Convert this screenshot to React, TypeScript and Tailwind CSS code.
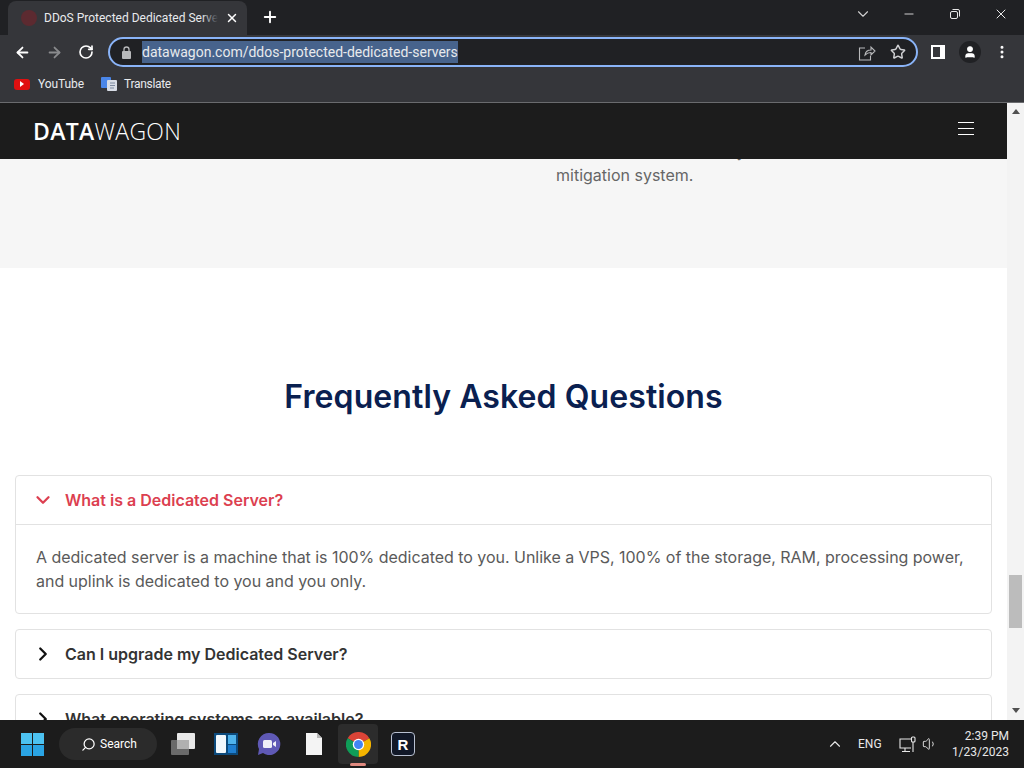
import { ArrowLeft, ArrowRight, ChevronDown, ChevronRight, ChevronUp, Minus, MoreVertical, Plus, RotateCw, Search, Star, User, Volume1, X } from 'lucide-react';

const faqs = ['Can I upgrade my Dedicated Server?', 'What operating systems are available?'];

function Chrome() {
  return (
    <div className="bg-[#35363a] text-white border-b border-[#6a6b6e] h-[103px] shrink-0 font-['Roboto',sans-serif]">
      <div className="h-[35px] bg-[#202124] flex items-end relative">
        <div className="ml-2 w-[239px] h-[34px] rounded-t-lg bg-[#35363a] flex items-center pl-[13px] pr-[8px]">
          <div className="w-4 h-4 rounded-full bg-[#5c2a30] shrink-0" />
          <div className="ml-[7px] relative w-[174px] overflow-hidden">
            <span className="block text-[12px] text-[#e8eaed] whitespace-nowrap">DDoS Protected Dedicated Serve</span>
            <div className="absolute right-0 top-0 bottom-0 w-4 bg-gradient-to-r from-transparent to-[#35363a]" />
          </div>
          <X className="ml-[7px] w-[14px] h-[14px]" strokeWidth={2.5} />
        </div>
        <Plus className="ml-[14px] mb-[9px] w-[18px] h-[18px]" strokeWidth={2.5} />
        <ChevronDown className="absolute left-[854px] top-[5px] w-[18px] h-[18px] text-[#d0d0d0]" strokeWidth={1.5} />
        <Minus className="absolute left-[902px] top-[7px] w-[14px] h-[14px] text-[#e8e8e8]" strokeWidth={1.5} />
        <svg className="absolute left-[950px] top-[9px] w-[10px] h-[10px] text-[#e8e8e8]" viewBox="0 0 10 10" fill="none" stroke="currentColor">
          <rect x="0.500" y="2.500" width="7" height="7" rx="1.500" />
          <path d="M2.500 .5H8a1.500 1.500 0 0 1 1.500 1.500v5.500" />
        </svg>
        <X className="absolute left-[993px] top-[6px] w-[16px] h-[16px] text-[#e8e8e8]" strokeWidth={1.5} />
      </div>
      <div className="h-[34px] flex items-center">
        <ArrowLeft className="ml-[14px] w-[17px] h-[17px]" strokeWidth={2.5} />
        <ArrowRight className="ml-[15px] w-[17px] h-[17px] text-[#8a8b8d]" strokeWidth={2.5} />
        <RotateCw className="ml-[15px] w-[16px] h-[16px]" strokeWidth={2.5} />
        <div className="ml-[14px] w-[810px] h-[30px] rounded-full border-2 border-[#8ab4f8] bg-[#202124] flex items-center relative">
          <svg className="ml-[11px] w-[11px] h-[13px] text-[#b8b9bb]" viewBox="0 0 11 13" fill="currentColor">
            <rect x="1" y="5" width="9" height="8" rx="1" />
            <path d="M3 5V3.500a2.500 2.500 0 0 1 5 0V5" fill="none" stroke="currentColor" strokeWidth="1.300" />
          </svg>
          <span className="ml-[10px] text-[14px] leading-[22px] h-[22px] bg-[#47638c] text-[#e8eaed] font-['Roboto',sans-serif]">datawagon.com/ddos-protected-dedicated-servers</span>
          <svg className="absolute left-[748px] top-[5px] w-[18px] h-[17px] text-[#b8b9bb]" viewBox="0 0 18 17" fill="none" stroke="currentColor" strokeWidth="1.1">
            <path d="M7 4H1.500v12h11v-4M7 11c.5-3.500 3-5 6-5V3l4 4-4 4V8.500c-2.500 0-4.500 1-6 2.500z" />
          </svg>
          <Star className="absolute left-[780px] top-[5px] w-[16px] h-[16px] text-[#d0d1d3]" strokeWidth={2.2} />
        </div>
        <div className="ml-[13px] w-[14px] h-[14px] bg-white"><div className="w-[7px] h-[10px] mt-[2px] ml-[2px] bg-[#35363a]" /></div>
        <div className="ml-[14px] w-[22px] h-[22px] rounded-full bg-[#202124] flex items-center justify-center"><User className="w-[14px] h-[14px] text-white" fill="white" /></div>
        <MoreVertical className="ml-[13px] w-[16px] h-[16px]" strokeWidth={2.5} />
      </div>
      <div className="h-[33px] pb-[3px] flex items-center text-[12px] text-[#e8eaed]">
        <div className="ml-[14px] w-[16px] h-[11px] rounded-[3px] bg-[#e01010] flex items-center justify-center">
          <div className="w-0 h-0 border-y-[3px] border-y-transparent border-l-[4px] border-l-white" />
        </div>
        <span className="ml-2 w-[46px] whitespace-nowrap tracking-[-0.1px]">YouTube</span>
        <svg className="ml-[17px] w-[16px] h-[16px]" viewBox="0 0 16 16">
          <rect x="0" y="1" width="10" height="11" rx="1" fill="#4a86e8" />
          <rect x="6" y="4" width="10" height="11" rx="1" fill="#d8dde6" />
          <path d="M9 7h5M9 9.500h5M9 12h4" stroke="#7d8aa0" strokeWidth="1" />
        </svg>
        <span className="ml-[7px] tracking-[-0.3px]">Translate</span>
      </div>
    </div>
  );
}

function Taskbar() {
  return (
    <div className="h-12 shrink-0 bg-[#1c1c1c] text-white flex items-center relative font-['Roboto',sans-serif]">
      <div className="ml-[21px] w-[23px] h-[23px] grid grid-cols-2 gap-[1px]">
        <div className="bg-[#4cc2f1]" /><div className="bg-[#4cc2f1]" /><div className="bg-[#2aa4e4]" /><div className="bg-[#2aa4e4]" />
      </div>
      <div className="ml-[15px] w-[98px] h-8 rounded-full bg-[#2b2b2b] flex items-center pl-[22px]">
        <Search className="w-[15px] h-[15px] -scale-x-100" strokeWidth={2} />
        <span className="ml-[4px] text-[12px]">Search</span>
      </div>
      <svg className="ml-[14px] w-[24px] h-[22px]" viewBox="0 0 24 22">
        <rect x="6" y="0" width="18" height="16" rx="1" fill="#e8e8e8" />
        <rect x="0" y="7" width="18" height="15" rx="1" fill="#6a6a6a" />
        <rect x="6" y="7" width="12" height="9" fill="#b0b0b0" />
      </svg>
      <svg className="ml-[19px] w-[24px] h-[22px]" viewBox="0 0 24 22">
        <rect x="0" y="0" width="24" height="22" fill="#0c4a7c" />
        <rect x="2" y="2" width="10" height="18" rx="1" fill="#f2f8fc" />
        <rect x="14" y="2" width="8" height="9" fill="#4fb3ec" />
        <rect x="14" y="12" width="8" height="8" fill="#1f7fd1" />
      </svg>
      <svg className="ml-[19px] w-[24px] h-[24px]" viewBox="0 0 24 24">
        <path d="M12 1a11 11 0 1 1-6 20L1 23l1-6A11 11 0 0 1 12 1z" fill="#5f59b5" />
        <rect x="6" y="8" width="9" height="8" rx="1.500" fill="#f0f0f8" />
        <path d="M16 11l3-2v6l-3-2z" fill="#f0f0f8" />
      </svg>
      <svg className="ml-[24px] w-[18px] h-[22px]" viewBox="0 0 18 22">
        <path d="M1 0h11l5 5v17H1z" fill="#f4f4f4" />
        <path d="M12 0l5 5h-5z" fill="#b8b8b8" />
      </svg>
      <div className="ml-[15px] w-10 h-10 rounded bg-[#2c2c2c] flex items-center justify-center relative">
        <svg className="w-[25px] h-[25px]" viewBox="0 0 24 24">
          <path d="M12 12 1.600 6A12 12 0 0 1 22.400 6z" fill="#db4437" />
          <path d="M12 12 22.400 6A12 12 0 0 1 12 24z" fill="#f4b400" />
          <path d="M12 12 12 24A12 12 0 0 1 1.600 6z" fill="#0f9d58" />
          <circle cx="12" cy="12" r="5.500" fill="#fff" />
          <circle cx="12" cy="12" r="4.300" fill="#4285f4" />
        </svg>
        <div className="absolute bottom-[-2px] left-[12px] w-[16px] h-[3px] rounded-full bg-[#e08a80]" />
      </div>
      <div className="ml-[13px] w-6 h-6 rounded border border-[#b8c0d0] bg-[#111827] flex items-center justify-center">
        <span className="text-[15px] leading-none font-extrabold font-['Liberation_Sans',sans-serif]">R</span>
      </div>
      <div className="ml-auto flex items-center">
        <ChevronUp className="w-[18px] h-[18px] text-[#e8e8e8]" strokeWidth={1.5} />
        <span className="ml-[14px] w-[24px] text-[12px] text-[#e8e8e8]">ENG</span>
        <svg className="ml-[17px] w-[17px] h-[17px] text-[#e8e8e8]" viewBox="0 0 17 17" fill="none" stroke="currentColor" strokeWidth="1.1">
          <path d="M12 3H1v9h11M6 12v3M3 15.500h8M14 6v10" />
          <rect x="12.500" y="1" width="3.500" height="5" rx="1" />
        </svg>
        <Volume1 className="ml-[6px] w-[16px] h-[16px] text-[#e8e8e8]" strokeWidth={1.4} />
        <div className="ml-[13px] mr-[15px] w-[58px] text-[12px] leading-[16px] text-right text-[#e8e8e8]">
          <div>2:39 PM</div>
          <div>1/23/2023</div>
        </div>
      </div>
    </div>
  );
}

function Scrollbar() {
  return (
    <div className="w-[17px] shrink-0 bg-[#f3f3f3] flex flex-col items-center">
      <div className="mt-[6px] w-0 h-0 border-x-[4px] border-x-transparent border-b-[5px] border-b-[#505050]" />
      <div className="mt-[461px] w-[13px] h-[53px] bg-[#bcbcbc]" />
      <div className="mt-[80px] w-0 h-0 border-x-[4px] border-x-transparent border-t-[5px] border-t-[#505050]" />
    </div>
  );
}

function Page() {
  return (
    <div className="flex-1 min-w-0 overflow-hidden bg-white font-['Inter',sans-serif]">
      <div className="h-14 bg-[#1c1c1c] flex items-center justify-between pl-[33px] pr-[33px] relative z-10">
        <div className="text-[23px] leading-none text-white tracking-[0.3px] font-['Open_Sans',sans-serif]">
          <span className="font-semibold">DATA</span><span className="font-light">WAGON</span>
        </div>
        <div className="w-4 -mt-[6px] flex flex-col gap-[5px]">
          <div className="h-[1px] bg-white" /><div className="h-[1px] bg-white" /><div className="h-[1px] bg-white" />
        </div>
      </div>
      <div className="h-[129px] bg-[#f6f6f6] pl-[556px] -mt-[20px] text-[16px] leading-[24px] text-[#666]">
        <div className="whitespace-nowrap">DDoS Protection (Voxility)</div>
        <div>mitigation system.</div>
      </div>
      <div className="px-[15px]">
        <h2 className="mt-[108px] text-center text-[32px] leading-[42px] font-semibold tracking-[0.08px] text-[#0a2050]">Frequently Asked Questions</h2>
        <div className="mt-[57px] border border-[#e2e2e2] rounded-[4px]">
          <div className="h-[49px] border-b border-[#e2e2e2] flex items-center pl-[16px]">
            <ChevronDown className="w-[22px] h-[22px] text-[#dc3f50]" strokeWidth={2.500} />
            <span className="ml-[11px] text-[16px] font-semibold text-[#dc3f50]">What is a Dedicated Server?</span>
          </div>
          <p className="px-[20px] pt-[20px] pb-[20px] text-[16px] leading-[24px] tracking-[-0.03px] text-[#5a5a5a]">
            A dedicated server is a machine that is 100% dedicated to you. Unlike a VPS, 100% of the storage, RAM, processing power, and uplink is dedicated to you and you only.
          </p>
        </div>
        {faqs.map((q) => (
          <div key={q} className="mt-[15px] h-[50px] border border-[#e2e2e2] rounded-[4px] flex items-center pl-[16px]">
            <ChevronRight className="w-[22px] h-[22px] text-[#111]" strokeWidth={2.500} />
            <span className="ml-[11px] text-[16px] font-semibold text-[#333]">{q}</span>
          </div>
        ))}
      </div>
    </div>
  );
}

export default function App() {
  return (
    <div className="w-[1024px] h-[768px] overflow-hidden flex flex-col">
      <Chrome />
      <div className="flex-1 min-h-0 flex">
        <Page />
        <Scrollbar />
      </div>
      <Taskbar />
    </div>
  );
}
